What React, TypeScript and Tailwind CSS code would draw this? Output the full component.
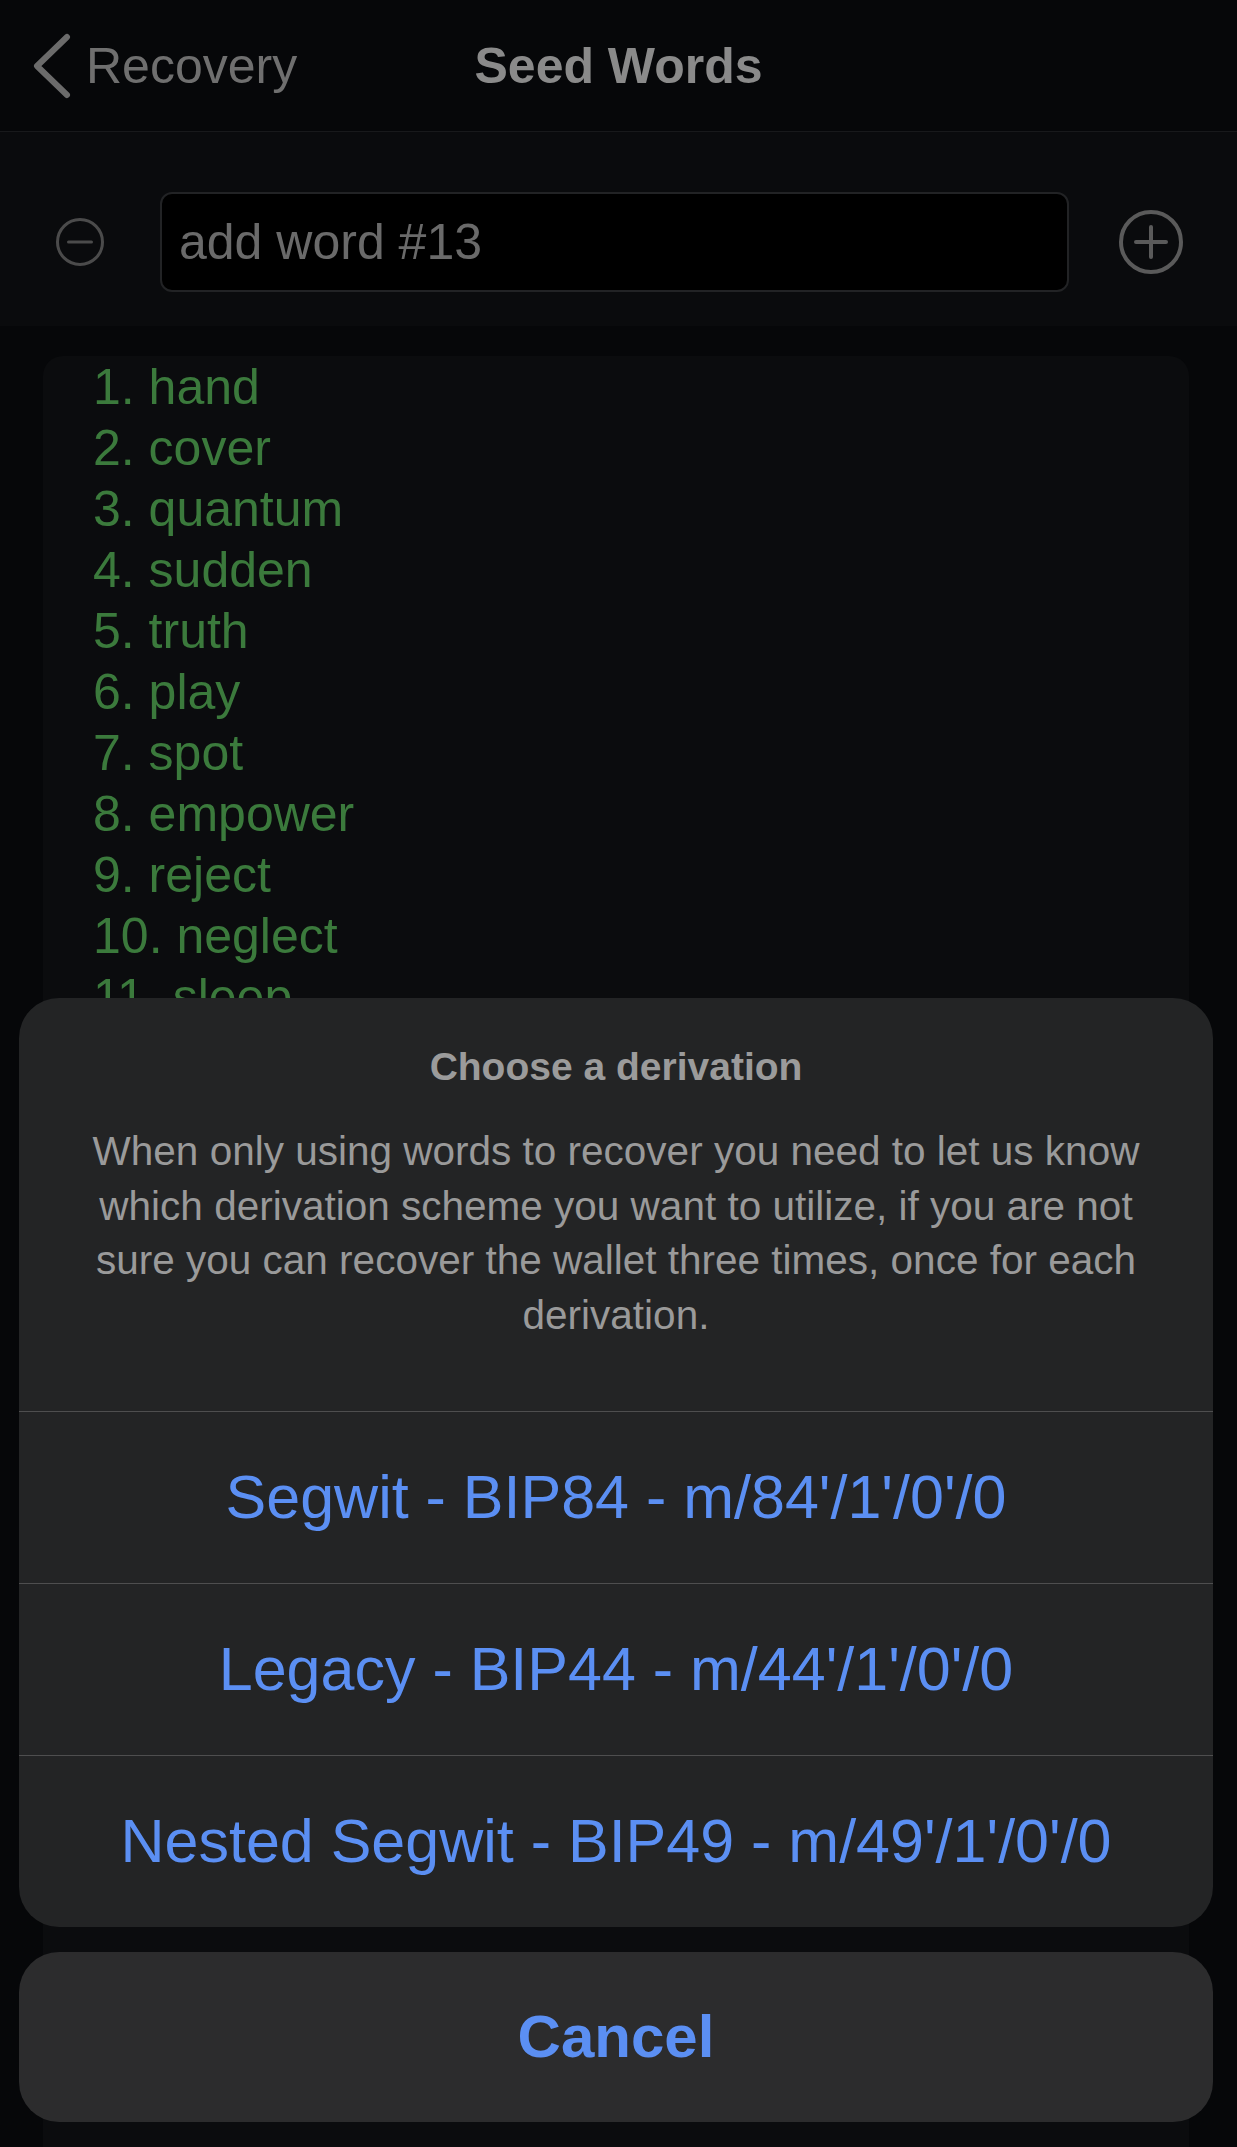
import React from "react";

const words = [
  "hand",
  "cover",
  "quantum",
  "sudden",
  "truth",
  "play",
  "spot",
  "empower",
  "reject",
  "neglect",
  "sleep",
];

const options = [
  "Segwit - BIP84 - m/84'/1'/0'/0",
  "Legacy - BIP44 - m/44'/1'/0'/0",
  "Nested Segwit - BIP49 - m/49'/1'/0'/0",
];

export default function App() {
  return (
    <div
      className="relative w-full h-[2147px] overflow-hidden bg-[#060709] flex flex-col"
      style={{ fontFamily: '"Liberation Sans", Arial, sans-serif' }}
    >
      {/* Header */}
      <div className="h-[132px] shrink-0 border-b border-[#18191b] grid grid-cols-[1fr_auto_1fr] items-center">
        <div className="flex items-center pl-[32px]">
          <svg width="40" height="66" viewBox="0 0 40 66" fill="none">
            <path
              d="M35 4 L5 33 L35 62"
              stroke="#6b6b6b"
              strokeWidth="6"
              strokeLinecap="round"
              strokeLinejoin="round"
            />
          </svg>
          <span className="ml-[14px] text-[50px] leading-[60px] text-[#6f6f6f]">
            Recovery
          </span>
        </div>
        <div className="text-[50px] leading-[60px] font-bold text-[#8a8a8a]">
          Seed Words
        </div>
        <div />
      </div>

      {/* Input row */}
      <div className="shrink-0 bg-[#0a0b0d] pt-[60px] pb-[34px] flex items-center">
        <svg width="50" height="50" viewBox="0 0 50 50" className="ml-[55px]" fill="none">
          <circle cx="25" cy="25" r="22.5" stroke="#4b4b4b" strokeWidth="3" />
          <line x1="13.5" y1="25" x2="36.5" y2="25" stroke="#4b4b4b" strokeWidth="3" strokeLinecap="round" />
        </svg>
        <div className="ml-[55px] w-[909px] h-[100px] rounded-[12px] border-2 border-[#222325] bg-black flex items-center pl-[17px]">
          <span className="text-[50px] leading-[58px] text-[#6a6a6a]">add word #13</span>
        </div>
        <svg width="66" height="66" viewBox="0 0 66 66" className="ml-[49px]" fill="none">
          <circle cx="33" cy="33" r="30" stroke="#5a5a5a" strokeWidth="4" />
          <line x1="18" y1="33" x2="48" y2="33" stroke="#5a5a5a" strokeWidth="4" strokeLinecap="round" />
          <line x1="33" y1="18" x2="33" y2="48" stroke="#5a5a5a" strokeWidth="4" strokeLinecap="round" />
        </svg>
      </div>

      {/* Word list */}
      <div className="mt-[30px] ml-[43px] mr-[48px] flex-1 rounded-t-[20px] bg-[#0b0c0e] pt-[1px] pl-[50px]">
        {words.map((w, i) => (
          <div key={w} className="text-[50px] leading-[61px] text-[#3b7a3c]">
            {i + 1}. {w}
          </div>
        ))}
      </div>

      {/* Action sheet */}
      <div className="absolute left-[19px] right-[24px] bottom-[25px] flex flex-col gap-[25px]">
        <div className="rounded-[40px] bg-[#232425] overflow-hidden">
          <div className="pt-[45px] pb-[69px] px-[30px] text-center">
            <div className="text-[39px] leading-[47px] font-bold text-[#9b9b9b]">
              Choose a derivation
            </div>
            <div className="mt-[34px] text-[40.5px] leading-[54.5px] text-[#9a9a9a]">
              When only using words to recover you need to let us know
              <br />
              which derivation scheme you want to utilize, if you are not
              <br />
              sure you can recover the wallet three times, once for each
              <br />
              derivation.
            </div>
          </div>
          {options.map((o) => (
            <div
              key={o}
              className="h-[172px] border-t border-[#4e4e4f] flex items-center justify-center text-[61px] text-[#5b8ff3]"
            >
              {o}
            </div>
          ))}
        </div>
        <div className="h-[170px] rounded-[40px] bg-[#2c2c2d] flex items-center justify-center text-[60px] font-bold text-[#5b8ff3]">
          Cancel
        </div>
      </div>
    </div>
  );
}
